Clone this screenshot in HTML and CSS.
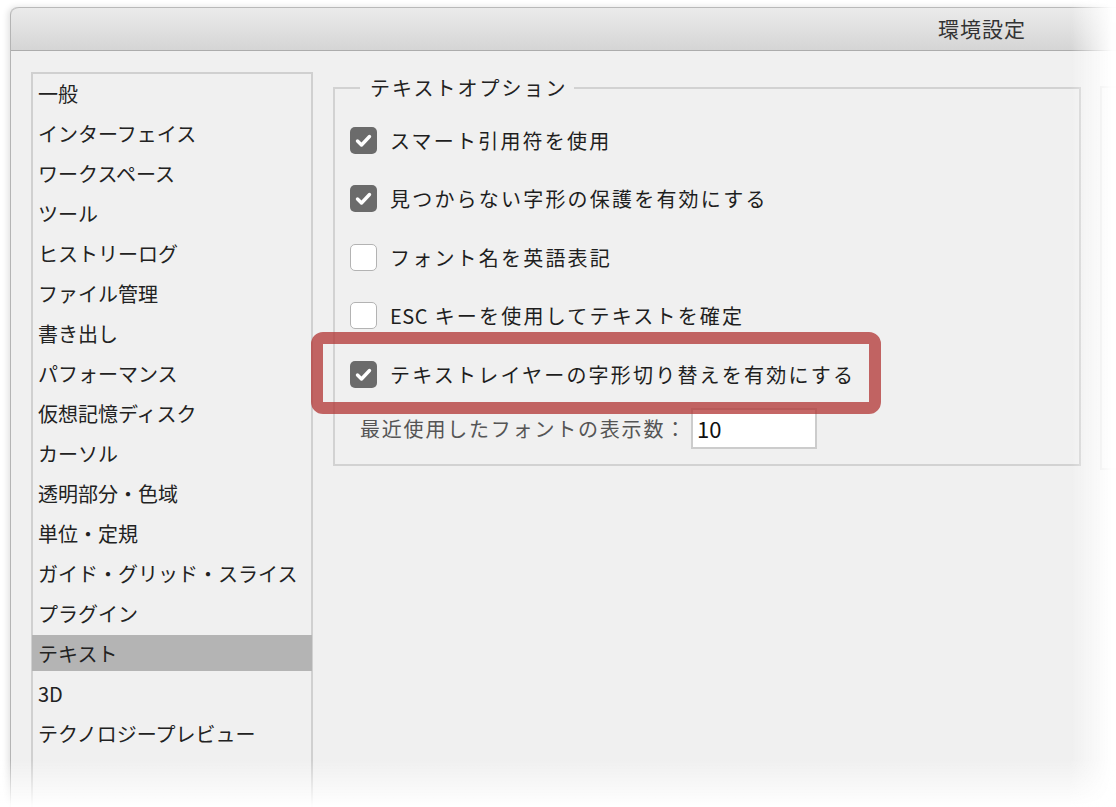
FILE: index.html
```html
<!DOCTYPE html>
<html lang="ja">

<head>
  <meta charset="UTF-8">
  <meta name="viewport" content="width=device-width, initial-scale=1.0">
  <title>環境設定</title>
  <link rel="stylesheet" href="styles.css">
</head>

<body>

  <div class="window">
    <div class="titlebar">
      <span class="title">環境設定</span>
    </div>

    <div class="content">
      <ul class="sidebar">
        <li>一般</li>
        <li>インターフェイス</li>
        <li>ワークスペース</li>
        <li>ツール</li>
        <li>ヒストリーログ</li>
        <li>ファイル管理</li>
        <li>書き出し</li>
        <li>パフォーマンス</li>
        <li>仮想記憶ディスク</li>
        <li>カーソル</li>
        <li>透明部分・色域</li>
        <li>単位・定規</li>
        <li>ガイド・グリッド・スライス</li>
        <li>プラグイン</li>
        <li class="selected">テキスト</li>
        <li>3D</li>
        <li>テクノロジープレビュー</li>
      </ul>

      <div class="panel">
        <fieldset class="group">
          <legend>テキストオプション</legend>

          <div class="option">
            <span class="box checked">
              <svg viewBox="0 0 27 27" width="27" height="27"><path d="M7.5 14 L11.5 18 L19.5 9.5" fill="none" stroke="#fff" stroke-width="3.4" stroke-linecap="round" stroke-linejoin="round"/></svg>
            </span>
            <span class="label">スマート引用符を使用</span>
          </div>

          <div class="option">
            <span class="box checked">
              <svg viewBox="0 0 27 27" width="27" height="27"><path d="M7.5 14 L11.5 18 L19.5 9.5" fill="none" stroke="#fff" stroke-width="3.4" stroke-linecap="round" stroke-linejoin="round"/></svg>
            </span>
            <span class="label">見つからない字形の保護を有効にする</span>
          </div>

          <div class="option">
            <span class="box"></span>
            <span class="label">フォント名を英語表記</span>
          </div>

          <div class="option">
            <span class="box"></span>
            <span class="label"><span class="latin">ESC</span> キーを使用してテキストを確定</span>
          </div>

          <div class="option highlight">
            <span class="box checked">
              <svg viewBox="0 0 27 27" width="27" height="27"><path d="M7.5 14 L11.5 18 L19.5 9.5" fill="none" stroke="#fff" stroke-width="3.4" stroke-linecap="round" stroke-linejoin="round"/></svg>
            </span>
            <span class="label">テキストレイヤーの字形切り替えを有効にする</span>
          </div>

          <div class="count-row">
            <span class="count-label">最近使用したフォントの表示数：</span>
            <input class="count-input" type="text" value="10">
          </div>
        </fieldset>

        <div class="group-next"></div>
      </div>
    </div>
  </div>

  <!-- 右端と下端のフェード -->
  <div class="fade"></div>

</body>

</html>
```

FILE: styles.css
```css
html,
body {
  margin: 0;
  padding: 0;
  background-color: #fff;
  overflow: hidden;
  font-family: "Noto Sans CJK JP", "Noto Sans", sans-serif;
  color: #222;
}

.window {
  margin: 7px 0 0 10px;
  width: 1160px;
  height: 860px;
  border-radius: 8px 8px 0 0;
  border-left: 1px solid #b4b4b4;
  background-color: #f0f0f0;
  box-shadow: -2px 0 6px rgba(0, 0, 0, 0.12);
}

.titlebar {
  height: 42px;
  border-top: 1px solid #b9b9b9;
  border-bottom: 1px solid #acacac;
  border-radius: 8px 8px 0 0;
  background: linear-gradient(#ebebeb, #d5d5d5);
  display: flex;
  align-items: center;
  justify-content: flex-end;
  padding-right: 145px;
}

.title {
  font-size: 21px;
  color: #333;
  letter-spacing: 1px;
  margin-top: -2px;
}

.content {
  display: flex;
  gap: 20px;
  padding: 21px 0 0 20px;
}

.sidebar {
  list-style: none;
  flex-shrink: 0;
  margin: 0;
  padding: 1px 0 0 0;
  width: 278px;
  height: 760px;
  border: 2px solid #d0d0d0;
  display: flex;
  flex-direction: column;
  gap: 4px;
}

.sidebar li {
  height: 36px;
  line-height: 37px;
  padding-left: 5px;
  font-size: 20px;
  color: #222;
  white-space: nowrap;
}

.sidebar li.selected {
  background-color: #b4b4b4;
  margin: 0 -1px;
  padding-left: 6px;
}

.panel {
  display: flex;
  flex-shrink: 0;
  gap: 19px;
  align-items: flex-start;
}

.group {
  width: 714px;
  flex-shrink: 0;
  margin: 4px 0 0 0;
  padding: 11px 15px 15px 15px;
  border: 2px solid #d2d2d2;
}

.group legend {
  margin-left: 10px;
  padding: 0 7px 0 10px;
  font-size: 20px;
  line-height: 24px;
  letter-spacing: 2px;
  color: #222;
}

.option {
  height: 58.5px;
  display: flex;
  align-items: center;
  gap: 13px;
  position: relative;
}

.box {
  width: 25px;
  height: 25px;
  border: 1px solid #b3b3b3;
  border-radius: 5px;
  background-color: #fff;
  flex-shrink: 0;
}

.box.checked {
  width: 27px;
  height: 27px;
  border: none;
  background-color: #6b6b6b;
}

.box svg {
  display: block;
}

.label {
  font-size: 20px;
  letter-spacing: 2.2px;
  color: #1e1e1e;
  white-space: nowrap;
}

.latin {
  letter-spacing: 0.5px;
}

/* 赤い枠の注釈 */
.highlight::after {
  content: "";
  position: absolute;
  left: -39px;
  top: -13px;
  width: 546px;
  height: 58px;
  border: 12px solid rgba(177, 52, 51, 0.75);
  border-radius: 12px;
  pointer-events: none;
}

.count-row {
  display: flex;
  align-items: center;
  gap: 4px;
  margin-top: 4px;
  padding-left: 10px;
}

.count-label {
  font-size: 20px;
  letter-spacing: 1.8px;
  color: #555;
  white-space: nowrap;
}

.count-input {
  width: 118px;
  height: 37px;
  margin: 0;
  padding: 0 0 0 4px;
  border: 2px solid #cccccc;
  background-color: #fff;
  font-family: "Noto Sans CJK JP", "Noto Sans", sans-serif;
  font-size: 22px;
  color: #111;
  outline: none;
}

.group-next {
  width: 300px;
  flex-shrink: 0;
  height: 380px;
  margin-top: 14px;
  border: 2px solid #d6d6d6;
}

.fade {
  position: fixed;
  left: 0;
  top: 0;
  width: 1116px;
  height: 807px;
  pointer-events: none;
  background:
    linear-gradient(to right, rgba(255, 255, 255, 0) 1070px, rgba(255, 255, 255, 0.97) 1112px),
    linear-gradient(to bottom, rgba(255, 255, 255, 0) 760px, rgba(255, 255, 255, 0.95) 805px);
}
```
